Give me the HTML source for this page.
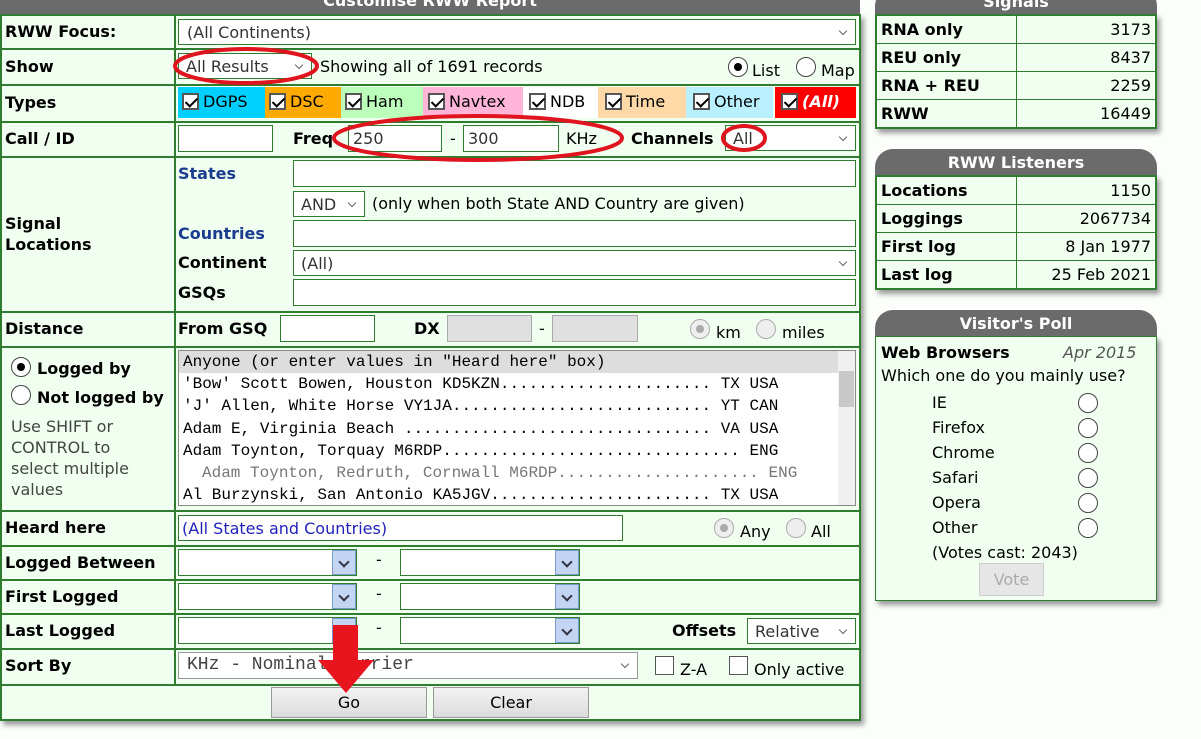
<!DOCTYPE html>
<html><head><meta charset="utf-8"><style>
*{box-sizing:border-box;margin:0;padding:0}
body{width:1201px;height:739px;background:#fbfefb;font-family:"DejaVu Sans","Liberation Sans",sans-serif;font-size:16px;color:#000;position:relative;overflow:hidden}
.a{position:absolute;white-space:nowrap}
.b{font-weight:bold}
.hl{position:absolute;left:0;width:860px;height:2px;background:#2f7d2f}
.inp{position:absolute;background:#fff;border:1px solid #2f7d2f;height:27px}
.dis{background:#e0e0e0;border-color:#aaa}
.sel::after{content:"";position:absolute;right:9px;top:8px;width:5px;height:5px;border:solid #666;border-width:0 1.5px 1.5px 0;transform:rotate(45deg)}
.cb{display:inline-block;width:17px;height:17px;border:2px solid #555;background:#fff;vertical-align:-3px;margin-right:4px;position:relative}
.cb::after{content:"";position:absolute;left:4px;top:0px;width:5px;height:10px;border:solid #000;border-width:0 2px 2px 0;transform:rotate(45deg)}
.rad{position:absolute;width:20px;height:20px;border:1.5px solid #444;border-radius:50%;background:#fff}
.rad.on::after{content:"";position:absolute;left:4.5px;top:4.5px;width:8px;height:8px;border-radius:50%;background:#000}
.rad.g{border-color:#aaa;background:#eee}
.rad.g.on::after{background:#aaa}
.cal{position:absolute;right:0;top:0;width:24px;height:100%;background:#c3d5f2;border:1px solid #7a9acb}
.cal::after{content:"";position:absolute;left:7px;top:7px;width:6px;height:6px;border:solid #334;border-width:0 2px 2px 0;transform:rotate(45deg)}
.btn{position:absolute;background:linear-gradient(#f2f2f2,#dcdcdc);border:1px solid #999;text-align:center;line-height:30px;font-size:16px}
.box{position:absolute;left:875px;width:282px;border:1px solid #2f7d2f;background:#f0fff0;box-shadow:3px 4px 5px #999}
.hdr{position:absolute;left:875px;width:282px;height:26px;background:#6b6b6b;border-radius:18px 18px 0 0;color:#fff;font-weight:bold;text-align:center;line-height:27px;font-size:16px}
.box table{border-collapse:collapse;width:100%}
.box td{border:1px solid #2f7d2f;height:28px;padding:0 4px;font-size:16px}
.box td:first-child{font-weight:bold;width:140px}
.box td:last-child{text-align:right}
.mono{font-family:"Liberation Mono",monospace;font-size:16px}
</style></head><body>
<div class="a" style="left:0;top:-12px;width:860px;height:26px;background:#6b6b6b;color:#fff;font-weight:bold;text-align:center;line-height:26px;font-size:16px">Customise RWW Report</div>
<div class="a" style="left:0;top:14px;width:861px;height:707px;background:#f0fff0;border:2px solid #2f7d2f;box-shadow:3px 4px 5px #999"></div>
<div class="a" style="left:174px;top:14px;width:2px;height:670px;background:#2f7d2f"></div>
<div class="hl" style="top:48px"></div><div class="hl" style="top:84px"></div><div class="hl" style="top:121px"></div><div class="hl" style="top:156px"></div><div class="hl" style="top:311px"></div><div class="hl" style="top:346px"></div><div class="hl" style="top:510px"></div><div class="hl" style="top:545px"></div><div class="hl" style="top:579px"></div><div class="hl" style="top:613px"></div><div class="hl" style="top:648px"></div><div class="hl" style="top:684px"></div>

<div class="a b" style="left:5px;top:22px">RWW Focus:</div>
<div class="a b" style="left:5px;top:57px">Show</div>
<div class="a b" style="left:5px;top:93px">Types</div>
<div class="a b" style="left:5px;top:129px">Call / ID</div>
<div class="a b" style="left:5px;top:213px;line-height:21px;white-space:normal">Signal<br>Locations</div>
<div class="a b" style="left:5px;top:319px">Distance</div>
<div class="a b" style="left:5px;top:518px">Heard here</div>
<div class="a b" style="left:5px;top:553px">Logged Between</div>
<div class="a b" style="left:5px;top:587px">First Logged</div>
<div class="a b" style="left:5px;top:621px">Last Logged</div>
<div class="a b" style="left:5px;top:656px">Sort By</div>

<div class="inp sel" style="left:178px;top:19px;width:678px;height:26px"><span class="a" style="left:8px;top:3px;color:#333">(All Continents)</span></div>
<div class="inp sel" style="left:178px;top:53px;width:134px;height:26px"><span class="a" style="left:7px;top:3px;color:#333">All Results</span></div>
<div class="a" style="left:320px;top:57px">Showing all of 1691 records</div>
<div class="rad on" style="left:728px;top:57px"></div><div class="a" style="left:752px;top:61px">List</div>
<div class="rad" style="left:796px;top:57px"></div><div class="a" style="left:821px;top:61px">Map</div>

<div class="a" style="left:178px;top:87px;width:87px;height:31px;background:#00d0ff;padding:5px 0 0 4px"><span class="cb"></span>DGPS</div>
<div class="a" style="left:265px;top:87px;width:76px;height:31px;background:#ffaa00;padding:5px 0 0 4px"><span class="cb"></span>DSC</div>
<div class="a" style="left:341px;top:87px;width:82px;height:31px;background:#bbffbb;padding:5px 0 0 4px"><span class="cb"></span>Ham</div>
<div class="a" style="left:423px;top:87px;width:100px;height:31px;background:#ffb4d8;padding:5px 0 0 5px"><span class="cb"></span>Navtex</div>
<div class="a" style="left:523px;top:87px;width:75px;height:31px;background:#fff;padding:5px 0 0 6px"><span class="cb"></span>NDB</div>
<div class="a" style="left:598px;top:87px;width:88px;height:31px;background:#ffd8a8;padding:5px 0 0 7px"><span class="cb"></span>Time</div>
<div class="a" style="left:686px;top:87px;width:87px;height:31px;background:#b8f0ff;padding:5px 0 0 7px"><span class="cb"></span>Other</div>
<div class="a" style="left:775px;top:87px;width:81px;height:31px;background:#ff0000;padding:5px 0 0 6px;color:#fff;font-weight:bold;font-style:italic"><span class="cb"></span>(All)</div>

<div class="inp" style="left:178px;top:125px;width:95px"></div>
<div class="a b" style="left:293px;top:129px">Freq</div>
<div class="inp" style="left:348px;top:125px;width:94px"><span class="a" style="left:4px;top:3px;color:#333">250</span></div>
<div class="a" style="left:450px;top:129px">-</div>
<div class="inp" style="left:463px;top:125px;width:96px"><span class="a" style="left:4px;top:3px;color:#333">300</span></div>
<div class="a" style="left:566px;top:129px">KHz</div>
<div class="a b" style="left:631px;top:129px">Channels</div>
<div class="inp sel" style="left:725px;top:125px;width:131px;height:26px"><span class="a" style="left:7px;top:3px;color:#333">All</span></div>

<div class="a b" style="left:178px;top:164px;color:#1a3d8f">States</div>
<div class="inp" style="left:293px;top:160px;width:563px"></div>
<div class="inp sel" style="left:293px;top:191px;width:72px;height:26px"><span class="a" style="left:7px;top:3px;color:#333">AND</span></div>
<div class="a" style="left:372px;top:194px">(only when both State AND Country are given)</div>
<div class="a b" style="left:178px;top:224px;color:#1a3d8f">Countries</div>
<div class="inp" style="left:293px;top:220px;width:563px"></div>
<div class="a b" style="left:178px;top:253px">Continent</div>
<div class="inp sel" style="left:293px;top:250px;width:563px;height:26px"><span class="a" style="left:7px;top:3px;color:#333">(All)</span></div>
<div class="a b" style="left:178px;top:283px">GSQs</div>
<div class="inp" style="left:293px;top:279px;width:563px"></div>

<div class="a b" style="left:178px;top:319px">From GSQ</div>
<div class="inp" style="left:280px;top:315px;width:95px"></div>
<div class="a b" style="left:414px;top:319px">DX</div>
<div class="inp dis" style="left:447px;top:315px;width:85px"></div>
<div class="a" style="left:539px;top:319px">-</div>
<div class="inp dis" style="left:552px;top:315px;width:86px"></div>
<div class="rad g on" style="left:690px;top:319px"></div><div class="a" style="left:716px;top:323px">km</div>
<div class="rad g" style="left:756px;top:319px"></div><div class="a" style="left:782px;top:323px">miles</div>

<div class="rad on" style="left:11px;top:357px"></div><div class="a b" style="left:37px;top:359px">Logged by</div>
<div class="rad" style="left:11px;top:385px"></div><div class="a b" style="left:37px;top:388px">Not logged by</div>
<div class="a" style="left:11px;top:416px;line-height:21px;white-space:normal;color:#444;width:160px">Use SHIFT or<br>CONTROL to<br>select multiple<br>values</div>
<div class="a mono" style="left:178px;top:350px;width:678px;height:156px;background:#fff;border:1px solid #888;overflow:hidden;line-height:22.2px">
<div style="background:#ddd;padding-left:4px;width:660px">Anyone (or enter values in "Heard here" box)</div>
<div style="padding-left:4px">'Bow' Scott Bowen, Houston KD5KZN...................... TX USA</div>
<div style="padding-left:4px">'J' Allen, White Horse VY1JA........................... YT CAN</div>
<div style="padding-left:4px">Adam E, Virginia Beach ................................ VA USA</div>
<div style="padding-left:4px">Adam Toynton, Torquay M6RDP...............................&nbsp;ENG</div>
<div style="padding-left:23px;color:#777">Adam Toynton, Redruth, Cornwall M6RDP.....................&nbsp;ENG</div>
<div style="padding-left:4px">Al Burzynski, San Antonio KA5JGV....................... TX USA</div>
<div class="a" style="right:0;top:0;width:17px;height:100%;background:#f0f0f0"></div>
<div class="a" style="right:1px;top:20px;width:15px;height:36px;background:#c8c8c8"></div>
</div>

<div class="inp" style="left:178px;top:515px;width:445px;height:26px"><span class="a" style="left:3px;top:3px;color:#2222bb">(All States and Countries)</span></div>
<div class="rad g on" style="left:714px;top:518px"></div><div class="a" style="left:740px;top:522px">Any</div>
<div class="rad g" style="left:786px;top:518px"></div><div class="a" style="left:811px;top:522px">All</div>

<div class="inp" style="left:178px;top:549px;width:179px"><div class="cal"></div></div>
<div class="a" style="left:376px;top:550px">-</div>
<div class="inp" style="left:400px;top:549px;width:180px"><div class="cal"></div></div>
<div class="inp" style="left:178px;top:583px;width:179px"><div class="cal"></div></div>
<div class="a" style="left:376px;top:584px">-</div>
<div class="inp" style="left:400px;top:583px;width:180px"><div class="cal"></div></div>
<div class="inp" style="left:178px;top:617px;width:179px"><div class="cal"></div></div>
<div class="a" style="left:376px;top:618px">-</div>
<div class="inp" style="left:400px;top:617px;width:180px"><div class="cal"></div></div>
<div class="a b" style="left:672px;top:621px">Offsets</div>
<div class="inp sel" style="left:747px;top:618px;width:109px;height:26px"><span class="a" style="left:7px;top:3px;color:#333">Relative</span></div>

<div class="inp sel" style="left:178px;top:652px;width:460px;border-color:#999"><span class="a" style="left:8px;top:2px;font-family:'Liberation Mono',monospace;font-size:18px;color:#444">KHz - Nominal carrier</span></div>
<div class="a" style="left:655px;top:656px;width:19px;height:19px;border:1.5px solid #555;background:#fff"></div><div class="a" style="left:680px;top:660px">Z-A</div>
<div class="a" style="left:729px;top:656px;width:19px;height:19px;border:1.5px solid #555;background:#fff"></div><div class="a" style="left:754px;top:660px">Only active</div>
<div class="btn" style="left:271px;top:687px;width:156px;height:31px">Go</div>
<div class="btn" style="left:433px;top:687px;width:156px;height:31px">Clear</div>

<div class="hdr" style="top:-12px">Signals</div>
<div class="box" style="top:14px"><table>
<tr><td>RNA only</td><td>3173</td></tr><tr><td>REU only</td><td>8437</td></tr><tr><td>RNA + REU</td><td>2259</td></tr><tr><td>RWW</td><td>16449</td></tr></table></div>
<div class="hdr" style="top:149px">RWW Listeners</div>
<div class="box" style="top:175px"><table>
<tr><td>Locations</td><td>1150</td></tr><tr><td>Loggings</td><td>2067734</td></tr><tr><td>First log</td><td>8 Jan 1977</td></tr><tr><td>Last log</td><td>25 Feb 2021</td></tr></table></div>
<div class="hdr" style="top:310px">Visitor's Poll</div>
<div class="box" style="top:336px;height:265px"></div>
<div class="a b" style="left:881px;top:343px">Web Browsers</div>
<div class="a" style="left:1063px;top:343px;font-style:italic;color:#555">Apr 2015</div>
<div class="a" style="left:881px;top:366px">Which one do you mainly use?</div>
<div class="a" style="left:932px;top:390px;line-height:25px">IE<br>Firefox<br>Chrome<br>Safari<br>Opera<br>Other<br>(Votes cast: 2043)</div>
<div class="rad" style="left:1078px;top:393px"></div><div class="rad" style="left:1078px;top:418px"></div><div class="rad" style="left:1078px;top:443px"></div><div class="rad" style="left:1078px;top:468px"></div><div class="rad" style="left:1078px;top:493px"></div><div class="rad" style="left:1078px;top:518px"></div>
<div class="btn" style="left:979px;top:563px;width:65px;height:33px;line-height:31px;color:#aaa;background:#e6e6e6;border-color:#ccc">Vote</div>

<svg class="a" style="left:0;top:0" width="1201" height="739">
<g fill="none" stroke="#e0141e" stroke-width="4">
<ellipse cx="246" cy="66" rx="71" ry="17"/>
<ellipse cx="478" cy="138" rx="144" ry="22"/>
<ellipse cx="744" cy="138" rx="21" ry="12"/>
</g>
<polygon fill="#e8141e" points="333,625 358,625 358,660 374,660 346,693 318,660 333,660"/>
</svg>
</body></html>
